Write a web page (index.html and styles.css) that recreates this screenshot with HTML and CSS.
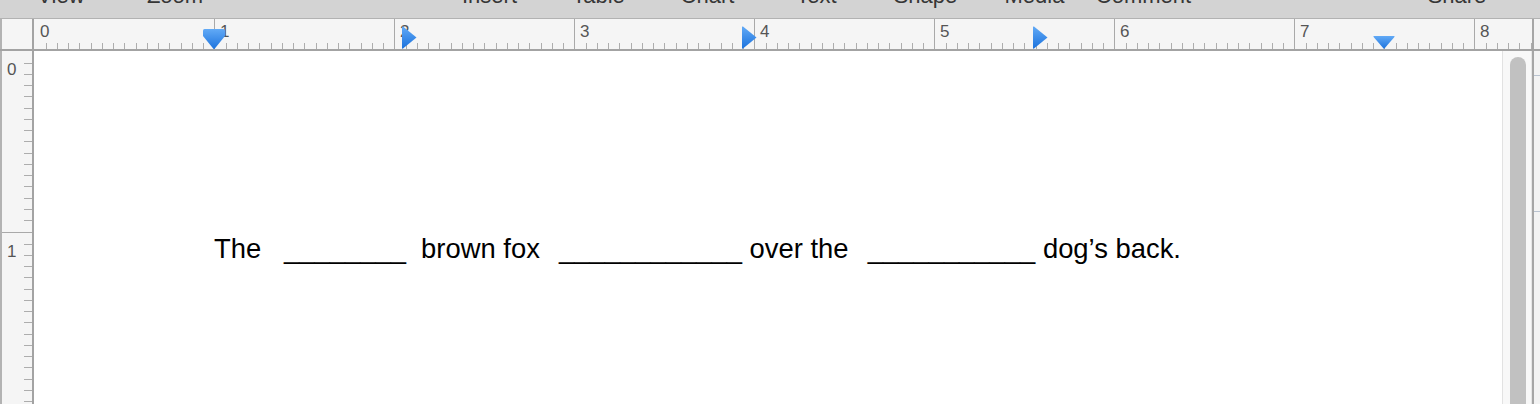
FILE: index.html
```html
<!DOCTYPE html>
<html lang="en">
  <head>
    <meta charset="UTF-8" />
    <meta name="viewport" content="width=device-width, initial-scale=1.0" />
    <title>Document - Fill in the blanks</title>
    <link rel="stylesheet" href="styles.css">
  </head>
  <body>
    <!-- toolbar labels, only the bottom of them is in view -->
    <header class="toolbar">
      <div class="tool-group left">
        <span class="tool">View</span>
        <span class="tool">Zoom</span>
      </div>
      <div class="tool-group middle">
        <span class="tool">Insert</span>
        <span class="tool">Table</span>
        <span class="tool">Chart</span>
        <span class="tool">Text</span>
        <span class="tool">Shape</span>
        <span class="tool">Media</span>
        <span class="tool">Comment</span>
      </div>
      <div class="tool-group right">
        <span class="tool">Share</span>
      </div>
    </header>

    <div class="ruler-row">
      <div class="corner"></div>
      <div class="hruler">
        <div class="inch first"><span>0</span></div>
        <div class="inch"><span>1</span></div>
        <div class="inch"><span>2</span></div>
        <div class="inch"><span>3</span></div>
        <div class="inch"><span>4</span></div>
        <div class="inch"><span>5</span></div>
        <div class="inch"><span>6</span></div>
        <div class="inch"><span>7</span></div>
        <div class="inch"><span>8</span></div>

        <!-- indent and tab markers -->
        <svg class="marker indent-left" width="22" height="21" viewBox="0 0 22 21">
          <defs>
            <linearGradient id="markerBlue" x1="0" y1="0" x2="0" y2="1">
              <stop offset="0" stop-color="#62aaf6" />
              <stop offset="1" stop-color="#1b72dd" />
            </linearGradient>
          </defs>
          <path d="M1.5 0 H20.5 Q22 0 22 1.5 V7 L11 20.5 L0 7 V1.5 Q0 0 1.5 0 Z" fill="url(#markerBlue)" />
        </svg>
        <svg class="marker tab tab-1" width="15" height="23" viewBox="0 0 15 23">
          <path d="M0 1 Q0 0 1 0.6 L14.5 11.5 L1 22.4 Q0 23 0 22 Z" fill="url(#markerBlue)" />
        </svg>
        <svg class="marker tab tab-2" width="15" height="23" viewBox="0 0 15 23">
          <path d="M0 1 Q0 0 1 0.6 L14.5 11.5 L1 22.4 Q0 23 0 22 Z" fill="url(#markerBlue)" />
        </svg>
        <svg class="marker tab tab-3" width="15" height="23" viewBox="0 0 15 23">
          <path d="M0 1 Q0 0 1 0.6 L14.5 11.5 L1 22.4 Q0 23 0 22 Z" fill="url(#markerBlue)" />
        </svg>
        <svg class="marker indent-right" width="22" height="13" viewBox="0 0 22 13">
          <path d="M1 0 H21 Q22 0 21.4 1 L11 13 L0.6 1 Q0 0 1 0 Z" fill="url(#markerBlue)" />
        </svg>
      </div>
      <div class="edge"></div>
      <div class="side"></div>
    </div>

    <div class="workspace">
      <div class="vruler">
        <div class="vinch first"><span>0</span></div>
        <div class="vinch"><span>1</span></div>
      </div>
      <main class="page">
        <p class="sentence">The   ________  brown fox  <span class="blank">____________</span> over the  <span class="blank">___________</span> dog’s back.</p>
      </main>
      <div class="scrollbar"><div class="thumb"></div></div>
      <div class="edge"></div>
      <div class="side">
        <div class="notch"></div>
        <div class="notch second"></div>
      </div>
    </div>
  </body>
</html>
```

FILE: styles.css
```css
body {
  margin: 0;
  width: 1540px;
  height: 404px;
  overflow: hidden;
  font-family: "Liberation Sans", Arial, sans-serif;
  background-color: #fff;
}

/* Toolbar */
.toolbar {
  display: flex;
  height: 18px;
  overflow: hidden;
  background-color: #d3d3d3;
  border-bottom: 1px solid #b2b2b2;
}

.tool-group {
  display: flex;
}

.tool {
  flex-shrink: 0;
  margin-top: -15px;
  font-size: 22px;
  line-height: 22px;
  text-align: center;
  color: #363636;
}

.left {
  padding-left: 4px;
}

.left .tool {
  width: 114px;
}

.middle {
  margin-left: 203px;
}

.middle .tool {
  width: 109px;
}

.right {
  margin-left: 204px;
}

.right .tool {
  width: 110px;
}

/* Horizontal ruler */
.ruler-row {
  display: flex;
  height: 30px;
  border-bottom: 2px solid #a3a3a3;
}

.corner {
  width: 30px;
  background-color: #f5f5f5;
  border-left: 2px solid #b3b3b3;
  border-right: 2px solid #a3a3a3;
}

.hruler {
  flex: 1;
  display: flex;
  position: relative;
  overflow: hidden;
  background-color: #f5f5f5;
}

/* 16 ticks per inch: a 45px tile holds 4 of them on whole pixels */
.inch {
  flex: 0 0 180px;
  box-sizing: border-box;
  border-left: 1px solid #a9a9a9;
  background-image: linear-gradient(to right,
    transparent 11px, #adadad 11px, #adadad 12px, transparent 12px,
    transparent 22px, #adadad 22px, #adadad 23px, transparent 23px,
    transparent 33px, #adadad 33px, #adadad 34px, transparent 34px,
    transparent 44px, #adadad 44px);
  background-size: 45px 6px;
  background-repeat: repeat-x;
  background-position: 0 100%;
  background-origin: content-box;
  background-clip: content-box;
}

.inch.first {
  border-left: none;
  padding-left: 1px;
}

.inch span {
  display: block;
  padding: 4px 0 0 5px;
  font-size: 17px;
  line-height: 17px;
  color: #555;
}

.marker {
  position: absolute;
  display: block;
}

.indent-left {
  left: 169px;
  top: 10px;
}

.tab {
  top: 7px;
}

.tab-1 {
  left: 368px;
}

.tab-2 {
  left: 708px;
}

.tab-3 {
  left: 999px;
}

.indent-right {
  left: 1339px;
  top: 17px;
}

.edge {
  width: 2px;
  background-color: #a6a6a6;
}

.side {
  width: 6px;
  background-color: #f3f3f3;
}

/* Workspace */
.workspace {
  display: flex;
  height: 353px;
  overflow: hidden;
}

.vruler {
  width: 30px;
  background-color: #f5f5f5;
  border-left: 2px solid #b3b3b3;
  border-right: 2px solid #a3a3a3;
  overflow: hidden;
}

.vinch {
  height: 180px;
  box-sizing: border-box;
  border-top: 1px solid #a9a9a9;
  background-image: linear-gradient(to bottom,
    transparent 11px, #adadad 11px, #adadad 12px, transparent 12px,
    transparent 22px, #adadad 22px, #adadad 23px, transparent 23px,
    transparent 33px, #adadad 33px, #adadad 34px, transparent 34px,
    transparent 44px, #adadad 44px);
  background-size: 8px 45px;
  background-repeat: repeat-y;
  background-position: 100% 0;
  background-origin: content-box;
  background-clip: content-box;
}

.vinch.first {
  height: 181px;
  padding: 1px 0;
  border-top: none;
}

.vinch span {
  display: block;
  padding: 10px 0 0 5px;
  font-size: 17px;
  line-height: 17px;
  color: #555;
}

.vinch.first span {
  padding-top: 9px;
}

.page {
  flex: 1;
  background-color: #fff;
}

.sentence {
  margin: 0;
  padding: 182px 0 0 180px;
  white-space: pre;
  font-size: 27.4px;
  line-height: 32px;
  color: #000;
}

.blank {
  margin-left: 4px;
}

.scrollbar {
  width: 28px;
  padding-top: 6px;
  background-color: #f8f8f8;
  border-left: 1px solid #e2e2e2;
  border-right: 1px solid #e6e6e6;
}

.thumb {
  margin-left: 7px;
  width: 16px;
  height: 400px;
  border-radius: 8px;
  background-color: #c1c1c1;
}

.notch {
  height: 1px;
  margin-top: 24px;
  background-color: #b9c3d0;
}

.notch.second {
  margin-top: 135px;
}
```
